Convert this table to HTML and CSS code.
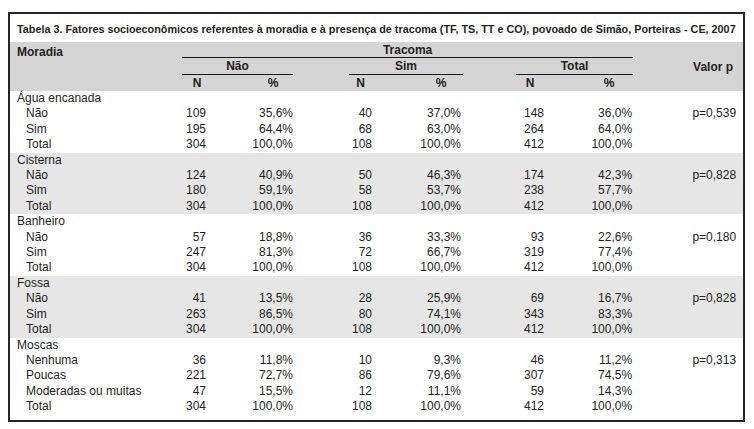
FILE: index.html
```html
<!DOCTYPE html>
<html lang="pt">
<head>
<meta charset="utf-8">
<title>Tabela 3</title>
<link rel="stylesheet" href="styles.css">
</head>
<body>
<div class="figure">
  <div class="caption">Tabela 3. Fatores socioeconômicos referentes à moradia e à presença de tracoma (TF, TS, TT e CO), povoado de Simão, Porteiras - CE, 2007</div>
  <table class="data">
    <colgroup>
      <col class="c-label"><col class="c-nn"><col class="c-np"><col class="c-gap1">
      <col class="c-sn"><col class="c-sp"><col class="c-gap2"><col class="c-tn"><col class="c-tp"><col class="c-p">
    </colgroup>
    <thead>
      <tr class="h1">
        <th class="h-mor" rowspan="3">Moradia</th>
        <th class="h-trac" colspan="8">Tracoma</th>
        <th class="h-val" rowspan="3">Valor p</th>
      </tr>
      <tr class="h2">
        <th class="h-grp" colspan="2">Não</th>
        <th></th>
        <th class="h-grp" colspan="2">Sim</th>
        <th></th>
        <th class="h-grp" colspan="2">Total</th>
      </tr>
      <tr class="h3">
        <th class="nn">N</th><th class="np">%</th><th></th>
        <th class="sn">N</th><th class="sp">%</th><th></th>
        <th class="tn">N</th><th class="tp">%</th>
      </tr>
    </thead>
    <tbody class="sec">
      <tr><td class="lab" colspan="10">Água encanada</td></tr>
      <tr><td class="sub">Não</td><td class="nn">109</td><td class="np">35,6%</td><td></td><td class="sn">40</td><td class="sp">37,0%</td><td></td><td class="tn">148</td><td class="tp">36,0%</td><td class="pv">p=0,539</td></tr>
      <tr><td class="sub">Sim</td><td class="nn">195</td><td class="np">64,4%</td><td></td><td class="sn">68</td><td class="sp">63,0%</td><td></td><td class="tn">264</td><td class="tp">64,0%</td><td class="pv"></td></tr>
      <tr><td class="sub">Total</td><td class="nn">304</td><td class="np">100,0%</td><td></td><td class="sn">108</td><td class="sp">100,0%</td><td></td><td class="tn">412</td><td class="tp">100,0%</td><td class="pv"></td></tr>
    </tbody>
    <tbody class="sec shade">
      <tr><td class="lab" colspan="10">Cisterna</td></tr>
      <tr><td class="sub">Não</td><td class="nn">124</td><td class="np">40,9%</td><td></td><td class="sn">50</td><td class="sp">46,3%</td><td></td><td class="tn">174</td><td class="tp">42,3%</td><td class="pv">p=0,828</td></tr>
      <tr><td class="sub">Sim</td><td class="nn">180</td><td class="np">59,1%</td><td></td><td class="sn">58</td><td class="sp">53,7%</td><td></td><td class="tn">238</td><td class="tp">57,7%</td><td class="pv"></td></tr>
      <tr><td class="sub">Total</td><td class="nn">304</td><td class="np">100,0%</td><td></td><td class="sn">108</td><td class="sp">100,0%</td><td></td><td class="tn">412</td><td class="tp">100,0%</td><td class="pv"></td></tr>
    </tbody>
    <tbody class="sec">
      <tr><td class="lab" colspan="10">Banheiro</td></tr>
      <tr><td class="sub">Não</td><td class="nn">57</td><td class="np">18,8%</td><td></td><td class="sn">36</td><td class="sp">33,3%</td><td></td><td class="tn">93</td><td class="tp">22,6%</td><td class="pv">p=0,180</td></tr>
      <tr><td class="sub">Sim</td><td class="nn">247</td><td class="np">81,3%</td><td></td><td class="sn">72</td><td class="sp">66,7%</td><td></td><td class="tn">319</td><td class="tp">77,4%</td><td class="pv"></td></tr>
      <tr><td class="sub">Total</td><td class="nn">304</td><td class="np">100,0%</td><td></td><td class="sn">108</td><td class="sp">100,0%</td><td></td><td class="tn">412</td><td class="tp">100,0%</td><td class="pv"></td></tr>
    </tbody>
    <tbody class="sec shade">
      <tr><td class="lab" colspan="10">Fossa</td></tr>
      <tr><td class="sub">Não</td><td class="nn">41</td><td class="np">13,5%</td><td></td><td class="sn">28</td><td class="sp">25,9%</td><td></td><td class="tn">69</td><td class="tp">16,7%</td><td class="pv">p=0,828</td></tr>
      <tr><td class="sub">Sim</td><td class="nn">263</td><td class="np">86,5%</td><td></td><td class="sn">80</td><td class="sp">74,1%</td><td></td><td class="tn">343</td><td class="tp">83,3%</td><td class="pv"></td></tr>
      <tr><td class="sub">Total</td><td class="nn">304</td><td class="np">100,0%</td><td></td><td class="sn">108</td><td class="sp">100,0%</td><td></td><td class="tn">412</td><td class="tp">100,0%</td><td class="pv"></td></tr>
    </tbody>
    <tbody class="sec">
      <tr><td class="lab" colspan="10">Moscas</td></tr>
      <tr><td class="sub">Nenhuma</td><td class="nn">36</td><td class="np">11,8%</td><td></td><td class="sn">10</td><td class="sp">9,3%</td><td></td><td class="tn">46</td><td class="tp">11,2%</td><td class="pv">p=0,313</td></tr>
      <tr><td class="sub">Poucas</td><td class="nn">221</td><td class="np">72,7%</td><td></td><td class="sn">86</td><td class="sp">79,6%</td><td></td><td class="tn">307</td><td class="tp">74,5%</td><td class="pv"></td></tr>
      <tr><td class="sub">Moderadas ou muitas</td><td class="nn">47</td><td class="np">15,5%</td><td></td><td class="sn">12</td><td class="sp">11,1%</td><td></td><td class="tn">59</td><td class="tp">14,3%</td><td class="pv"></td></tr>
      <tr><td class="sub">Total</td><td class="nn">304</td><td class="np">100,0%</td><td></td><td class="sn">108</td><td class="sp">100,0%</td><td></td><td class="tn">412</td><td class="tp">100,0%</td><td class="pv"></td></tr>
    </tbody>
  </table>
</div>
</body>
</html>
```

FILE: styles.css
```css
html, body {
  margin: 0;
  padding: 0;
  background: #ffffff;
}

body {
  font-family: "Liberation Sans", Arial, sans-serif;
  color: #231f20;
  padding: 12px 0 0 8px;
}

.figure {
  width: 733px;
  border: 2px solid #262626;
  padding-bottom: 5px;
}

.caption {
  height: 28px;
  line-height: 30px;
  padding-left: 7px;
  font-size: 10.8px;
  font-weight: bold;
  white-space: nowrap;
}

.data {
  width: 733px;
  table-layout: fixed;
  border-collapse: collapse;
  border-spacing: 0;
  font-size: 12px;
}

.c-label { width: 172px; }
.c-nn { width: 55px; }
.c-np { width: 56px; }
.c-gap1 { width: 56px; }
.c-sn { width: 57px; }
.c-sp { width: 57px; }
.c-gap2 { width: 53px; }
.c-tn { width: 59px; }
.c-tp { width: 58px; }
.c-p { width: 110px; }

.data th,
.data td {
  padding: 0;
  white-space: nowrap;
}

.data thead {
  background: #d4d4d4;
}

.data th {
  font-weight: bold;
  font-size: 12px;
}

.h1 th { height: 15px; }
.h2 th { height: 16px; }
.h3 th { height: 16px; }

.h-mor {
  text-align: left;
  vertical-align: top;
  padding: 3px 0 0 7px !important;
}

.h-trac {
  text-align: center;
  border-bottom: 1px solid #1a1a1a;
  line-height: 14px;
  vertical-align: middle;
}

.h-val {
  text-align: right;
  vertical-align: middle;
  padding-right: 10px !important;
}

.h-grp {
  text-align: center;
  border-bottom: 1px solid #1a1a1a;
  line-height: 15px;
}

.h3 th {
  line-height: 16px;
}

.h3 .nn { text-align: center; padding-left: 6px; padding-right: 31px; }
.h3 .np { text-align: center; padding-left: 16px; }
.h3 .sn { text-align: center; padding-right: 34px; }
.h3 .sp { text-align: center; padding-left: 15px; padding-right: 2px; }
.h3 .tn { text-align: center; padding-right: 31px; }
.h3 .tp { text-align: center; padding-left: 11px; padding-right: 1px; }

.sec td {
  height: 15.4px;
  line-height: 15.4px;
}

.shade {
  background: #e6e6e6;
}

.lab {
  text-align: left;
  padding-left: 7px !important;
}

.sub {
  text-align: left;
  padding-left: 16px !important;
}

tbody .nn { text-align: right; padding-right: 31px; }
tbody .np { text-align: right; }
tbody .sn { text-align: right; padding-right: 34px; }
tbody .sp { text-align: right; padding-right: 2px; }
tbody .tn { text-align: right; padding-right: 31px; }
tbody .tp { text-align: right; padding-right: 1px; }
tbody .pv { text-align: right; padding-right: 7px; }
```
